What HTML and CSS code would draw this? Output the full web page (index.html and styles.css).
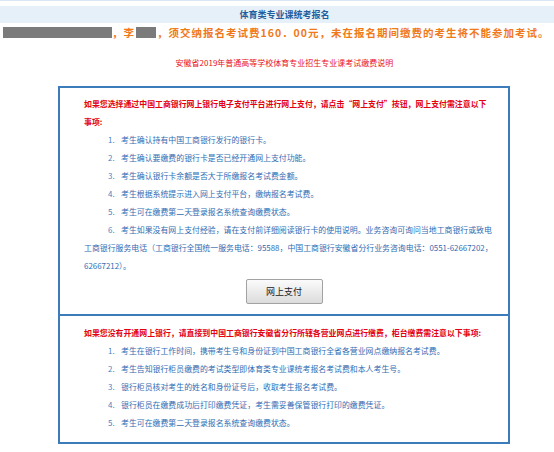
FILE: index.html
```html
<!DOCTYPE html>
<html lang="zh-CN">
<head>
<meta charset="utf-8">
<title>体育类专业课统考报名</title>
<link rel="stylesheet" href="styles.css">
</head>
<body>
<div class="topline"></div>
<div class="titlebar"><span class="title">体育类专业课统考报名</span></div>
<div class="notice"><span class="redact r1"></span>，李<span class="redact r2"></span>，须交纳报名考试费160．00元，未在报名期间缴费的考生将不能参加考试。</div>
<div class="subtitle">安徽省2019年普通高等学校体育专业招生专业课考试缴费说明</div>
<div class="panel">
  <div class="sec sec1">
    <p class="lead">如果您选择通过中国工商银行网上银行电子支付平台进行网上支付，请点击“网上支付”按钮，网上支付需注意以下<br>事项:</p>
    <ol class="items">
      <li><span class="num">1.</span><span>考生确认持有中国工商银行发行的银行卡。</span></li>
      <li><span class="num">2.</span><span>考生确认要缴费的银行卡是否已经开通网上支付功能。</span></li>
      <li><span class="num">3.</span><span>考生确认银行卡余额是否大于所缴报名考试费金额。</span></li>
      <li><span class="num">4.</span><span>考生根据系统提示进入网上支付平台，缴纳报名考试费。</span></li>
      <li><span class="num">5.</span><span>考生可在缴费第二天登录报名系统查询缴费状态。</span></li>
    </ol>
    <p class="para"><span class="num">6.</span>考生如果没有网上支付经验，请在支付前详细阅读银行卡的使用说明。业务咨询可询问当地工商银行或致电<br>工商银行服务电话（工商银行全国统一服务电话：95588，中国工商银行安徽省分行业务咨询电话：0551-62667202，<br>62667212）。</p>
    <div class="btn-row"><button class="btn" type="button">网上支付</button></div>
  </div>
  <div class="sec sec2">
    <p class="lead">如果您没有开通网上银行，请直接到中国工商银行安徽省分行所辖各营业网点进行缴费，柜台缴费需注意以下事项:</p>
    <ol class="items">
      <li><span class="num">1.</span><span>考生在银行工作时间，携带考生号和身份证到中国工商银行全省各营业网点缴纳报名考试费。</span></li>
      <li><span class="num">2.</span><span>考生告知银行柜员缴费的考试类型即体育类专业课统考报名考试费和本人考生号。</span></li>
      <li><span class="num">3.</span><span>银行柜员核对考生的姓名和身份证号后，收取考生报名考试费。</span></li>
      <li><span class="num">4.</span><span>银行柜员在缴费成功后打印缴费凭证，考生需妥善保管银行打印的缴费凭证。</span></li>
      <li><span class="num">5.</span><span>考生可在缴费第二天登录报名系统查询缴费状态。</span></li>
    </ol>
  </div>
</div>
</body>
</html>
```
FILE: styles.css
```css
html, body {
  margin: 0;
  padding: 0;
  background: #ffffff;
  overflow: hidden;
}
body {
  font-family: "Noto Sans CJK SC", "Noto Sans", sans-serif;
  color: #333;
}
.topline {
  height: 1px;
  background: #d9e7f4;
}
.titlebar {
  margin-top: 5px;
  height: 17px;
  background: #e6f0f9;
  display: flex;
  justify-content: center;
  align-items: center;
  padding-left: 15px;
}
.title {
  font-size: 9px;
  font-weight: 700;
  color: #1f5f9e;
  line-height: 17px;
}
.notice {
  margin-top: 1px;
  height: 16px;
  display: flex;
  align-items: center;
  padding-left: 3px;
  font-size: 10.5px;
  font-weight: 700;
  color: #f07a1a;
  letter-spacing: 1px;
  white-space: nowrap;
}
.redact {
  display: inline-block;
  background: #7b7b7b;
  height: 11px;
}
.r1 { width: 109px; }
.r2 { width: 20px; margin: 0 1px 0 1px; }
.subtitle {
  margin-top: 16px;
  height: 14px;
  line-height: 14px;
  text-align: center;
  padding-left: 15px;
  font-size: 8px;
  color: #e8101a;
}
.panel {
  margin: 16px 0 0 58px;
  width: 448px;
  border: 2px solid #3d7cbb;
  background: #fff;
}
.sec {
  padding: 7px 14px 10px 24px;
}
.sec2 {
  border-top: 2px solid #3d7cbb;
  padding-top: 8px;
}
.lead {
  margin: 0;
  color: #e3000f;
  font-weight: 700;
  font-size: 7.9px;
  line-height: 18px;
  white-space: nowrap;
}
.items {
  list-style: none;
  margin: 0;
  padding: 0 0 0 24px;
}
.items li {
  display: flex;
  font-size: 7.9px;
  line-height: 18px;
  color: #2f6cb3;
  white-space: nowrap;
}
.num {
  display: inline-block;
  width: 13px;
  flex: none;
  color: #4a7fbf;
}
.para {
  margin: 0;
  font-size: 7.9px;
  line-height: 18px;
  color: #2f6cb3;
  white-space: nowrap;
}
.para .num {
  margin-left: 24px;
}
.btn-row {
  display: flex;
  justify-content: center;
  margin: 4px -14px 0 -24px;
}
.btn {
  width: 77px;
  height: 25px;
  box-sizing: border-box;
  border: 1px solid #a2a2a2;
  border-radius: 2px;
  background: linear-gradient(#fbfbfb, #dcdcdc);
  font-family: "Noto Sans CJK SC", sans-serif;
  font-size: 9px;
  color: #222;
  padding: 0;
}
```
